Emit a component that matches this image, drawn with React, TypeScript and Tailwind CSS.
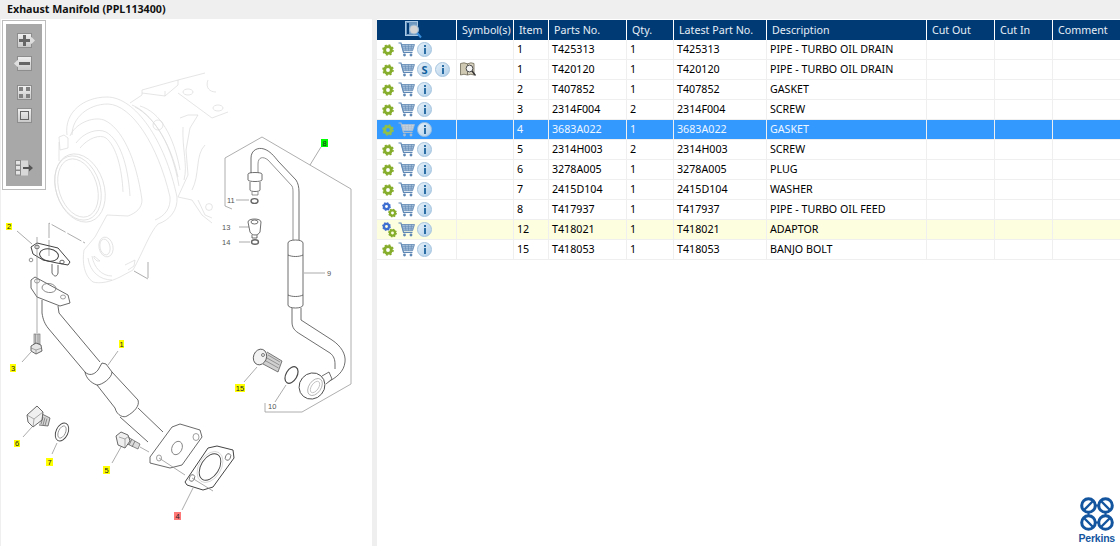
import type { ReactNode } from 'react';

const GRID =
  'grid grid-cols-[80px_57px_35px_78px_47px_93px_160px_68px_58px_67px]';

interface Part {
  item: string;
  no: string;
  qty: string;
  desc: string;
  multi?: boolean;
  service?: boolean;
  selected?: boolean;
  noted?: boolean;
}

const parts: Part[] = [
  { item: '1', no: 'T425313', qty: '1', desc: 'PIPE - TURBO OIL DRAIN' },
  { item: '1', no: 'T420120', qty: '1', desc: 'PIPE - TURBO OIL DRAIN', service: true },
  { item: '2', no: 'T407852', qty: '1', desc: 'GASKET' },
  { item: '3', no: '2314F004', qty: '2', desc: 'SCREW' },
  { item: '4', no: '3683A022', qty: '1', desc: 'GASKET', selected: true },
  { item: '5', no: '2314H003', qty: '2', desc: 'SCREW' },
  { item: '6', no: '3278A005', qty: '1', desc: 'PLUG' },
  { item: '7', no: '2415D104', qty: '1', desc: 'WASHER' },
  { item: '8', no: 'T417937', qty: '1', desc: 'PIPE - TURBO OIL FEED', multi: true },
  { item: '12', no: 'T418021', qty: '1', desc: 'ADAPTOR', multi: true, noted: true },
  { item: '15', no: 'T418053', qty: '1', desc: 'BANJO BOLT' },
];

function GearShape({ cx, cy, r, color }: { cx: number; cy: number; r: number; color: string }) {
  const circ = 2 * Math.PI * (r - 0.8);
  return (
    <g fill="none" stroke={color}>
      <circle cx={cx} cy={cy} r={r * 0.58} strokeWidth={r * 0.5} />
      <circle cx={cx} cy={cy} r={r - 0.8} strokeWidth={1.6} strokeDasharray={`${circ / 16} ${circ / 16}`} />
    </g>
  );
}

function Gear({ faded }: { faded?: boolean }) {
  return (
    <svg width="12" height="12" viewBox="0 0 12 12" className="shrink-0">
      <GearShape cx={6} cy={6} r={5.8} color={faded ? '#8fc04a' : '#86ad2c'} />
    </svg>
  );
}

function MultiGear() {
  return (
    <svg width="15" height="16" viewBox="0 0 15 16" className="-mr-[3px] shrink-0">
      <GearShape cx={4.5} cy={4.5} r={4.4} color="#3f6fd0" />
      <GearShape cx={10.5} cy={11} r={4.4} color="#86ad2c" />
    </svg>
  );
}

function Cart({ faded }: { faded?: boolean }) {
  const c = faded ? '#a9bccf' : '#5f88b4';
  return (
    <svg width="17" height="15" viewBox="0 0 17 15" fill="none" className="shrink-0">
      <path d="M0.5 1 L3 1 L5.5 10.5 L14.5 10.5" stroke={c} strokeWidth="1.2" />
      <path d="M3.6 2.5 L16.5 2.5 L14.5 8.8 L5.2 8.8 Z" fill={faded ? '#c4d2e0' : '#a5bfd9'} stroke={c} strokeWidth="0.8" />
      <path d="M7 2.5 L8 8.8 M10.3 2.5 L10.6 8.8 M13.5 2.5 L13 8.8 M4.2 4.7 L15.8 4.7 M4.8 6.8 L15.1 6.8" stroke={c} strokeWidth="0.6" />
      <circle cx="6.5" cy="13" r="1.4" fill={c} />
      <circle cx="13" cy="13" r="1.4" fill={c} />
    </svg>
  );
}

function Bubble({ children }: { children: ReactNode }) {
  return (
    <span className="flex h-[15px] w-[15px] shrink-0 items-center justify-center rounded-full border border-[#a3c3de] bg-gradient-to-br from-[#e6f0f9] to-[#b0cfe8]">
      {children}
    </span>
  );
}

function Info() {
  return (
    <Bubble>
      <span className="flex flex-col items-center gap-[1px]">
        <span className="h-[2px] w-[2px] bg-[#2a6ea5]" />
        <span className="h-[6px] w-[2px] bg-[#2a6ea5]" />
      </span>
    </Bubble>
  );
}

function Service() {
  return (
    <Bubble>
      <span className="text-[11px] leading-none font-bold text-[#0f5f9c]">S</span>
    </Bubble>
  );
}

function BookSearch() {
  return (
    <svg width="17" height="15" viewBox="0 0 17 15" fill="none" className="ml-[3px] shrink-0">
      <path d="M0.5 1.5 Q4 0 7.5 1.8 L7.5 13 Q4 11.5 0.5 13 Z" fill="#cfc9b4" stroke="#6f6a58" strokeWidth="0.8" />
      <path d="M7.5 1.8 Q11 0 14 1.5 L14 13 Q11 11.5 7.5 13 Z" fill="#d9d4c2" stroke="#6f6a58" strokeWidth="0.8" />
      <circle cx="9.5" cy="6.5" r="3.4" fill="#f4f4f4" stroke="#4c4c4c" strokeWidth="1" />
      <path d="M12 9 L15.5 13.5" stroke="#333" strokeWidth="1.4" />
    </svg>
  );
}

function HeaderSearch() {
  return (
    <svg width="17" height="18" viewBox="0 0 17 18" fill="none">
      <rect x="0.5" y="0.5" width="12" height="14" fill="#6f98c0" stroke="#a9c8e4" />
      <rect x="2" y="2" width="2" height="11" fill="#003a75" />
      <circle cx="9" cy="8.5" r="4.5" fill="#d4d4d4" stroke="#8fb3d3" strokeWidth="1.2" />
      <path d="M12.200 12 L16 16.500" stroke="#3a8fdc" strokeWidth="2" />
    </svg>
  );
}

function Row({ part }: { part: Part }) {
  const bg = part.selected ? 'bg-[#3399ff] text-[#eef6ff]' : part.noted ? 'bg-[#fdfde0] text-black' : 'bg-white text-black';
  const cell = 'border-r border-r-[#efefef] pl-[3px] whitespace-nowrap';
  return (
    <div className={`${GRID} h-[20px] border-b border-b-[#efefef] text-[10.7px] leading-[18px] ${bg}`}>
      <div className="flex items-center border-r border-r-[#efefef] pl-[5px]">
        {part.multi ? <MultiGear /> : <Gear faded={part.selected} />}
        <span className="mr-[2px] ml-[4px]">
          <Cart faded={part.selected} />
        </span>
        {part.service && (
          <span className="mr-[3px]">
            <Service />
          </span>
        )}
        <Info />
      </div>
      <div className="flex items-center border-r border-r-[#efefef]">{part.service && <BookSearch />}</div>
      <div className={cell}>{part.item}</div>
      <div className={cell}>{part.no}</div>
      <div className={cell}>{part.qty}</div>
      <div className={cell}>{part.no}</div>
      <div className={cell}>{part.desc}</div>
      <div className={cell} />
      <div className={cell} />
      <div />
    </div>
  );
}

function ToolButton({ children, className }: { children: ReactNode; className?: string }) {
  return (
    <div className={`relative flex h-[15px] w-[15px] items-center justify-center border border-[#8d8d8d] bg-gradient-to-b from-[#f0f0f0] to-[#c9c9c9] ${className ?? ''}`}>
      {children}
    </div>
  );
}

function Toolbar() {
  return (
    <div className="absolute top-[1px] left-[1px] h-[170px] w-[44px] border border-[#bcbcbc] bg-white p-[3px]">
      <div className="flex h-full w-full flex-col items-center bg-[#a8a8a8] pt-[9px]">
        <ToolButton>
          <span className="absolute top-[4px] -right-[3px] h-[5px] w-[5px] rotate-45 bg-[#dedede]" />
          <svg width="11" height="11" viewBox="0 0 11 11" className="relative">
            <path d="M0 4h4V0h3v4h4v3H7v4H4V7H0z" fill="#666" />
          </svg>
        </ToolButton>
        <ToolButton className="mt-[8px]">
          <span className="absolute top-[4px] -left-[3px] h-[5px] w-[5px] rotate-45 bg-[#dedede]" />
          <svg width="11" height="3" viewBox="0 0 11 3" className="relative">
            <rect width="11" height="3" fill="#666" />
          </svg>
        </ToolButton>
        <ToolButton className="mt-[14px]">
          <svg width="13" height="13" viewBox="0 0 13 13" fill="#808080">
            <rect x="1" y="1" width="4" height="4" />
            <rect x="8" y="1" width="4" height="4" />
            <rect x="1" y="8" width="4" height="4" />
            <rect x="8" y="8" width="4" height="4" />
          </svg>
        </ToolButton>
        <ToolButton className="mt-[8px]">
          <svg width="9" height="9" viewBox="0 0 9 9" fill="none">
            <rect x="0.5" y="0.5" width="8" height="8" stroke="#666" />
          </svg>
        </ToolButton>
        <svg width="18" height="16" viewBox="0 0 18 16" className="mt-[37px]">
          <rect x="0.5" y="0.5" width="5" height="4.5" fill="#e4e4e4" stroke="#8a8a8a" />
          <rect x="0.5" y="5.5" width="5" height="4.5" fill="#e4e4e4" stroke="#8a8a8a" />
          <rect x="0.5" y="10.5" width="5" height="4.5" fill="#e4e4e4" stroke="#8a8a8a" />
          <rect x="6" y="0.5" width="7" height="15" fill="#d8d8d8" />
          <path d="M8 7h6V4.5L18 8l-4 3.5V9H8z" fill="#555" />
        </svg>
      </div>
    </div>
  );
}

function Callout({ x, y, w, h, label, fill }: { x: number; y: number; w: number; h: number; label: string; fill: string }) {
  return (
    <g>
      <rect x={x} y={y} width={w} height={h} fill={fill} />
      <text x={x + w / 2} y={y + h - 1.5} textAnchor="middle" fontSize="7.5" fontFamily="Liberation Sans, sans-serif" fill="#222">
        {label}
      </text>
    </g>
  );
}

function PlainLabel({ x, y, label }: { x: number; y: number; label: string }) {
  return (
    <text x={x} y={y} fontSize="7.5" fontFamily="Liberation Sans, sans-serif" fill="#555">
      {label}
    </text>
  );
}

function Diagram() {
  return (
    <svg width="371" height="527" viewBox="1 19 371 527" fill="none" className="block">
      {/* turbo, ghosted */}
      <g stroke="#dadada" strokeWidth="0.7">
        <path d="M67 135 C64 112 84 97 107 97 C135 97 165 140 177 197 C178 210 170 220 158 224 C150 232 143 252 133 270 L120 277 C110 282 100 284 93 282 C84 276 82 262 84 250 L95 237 L107 215" />
        <path d="M72 135 C72 118 88 104 108 104 C132 105 158 145 170 197 C171 208 165 216 155 220" />
        <path d="M70 136 C75 124 92 116 104 120 C122 128 136 158 142 200 C142 208 136 213 128 216 L107 215" />
        <path d="M76 143 C84 132 98 128 106 132 C120 140 128 165 130 196" />
        <path d="M80 148 C88 138 100 134 106 138 C116 146 122 168 123 192" />
        <ellipse cx="78" cy="188" rx="22" ry="33" transform="rotate(-18 78 188)" />
        <ellipse cx="78" cy="188" rx="19" ry="30" transform="rotate(-18 78 188)" />
        <ellipse cx="80" cy="188" rx="24" ry="35" transform="rotate(-18 80 188)" />
        <path d="M59 137 L60 150 L68 148 L68 138 L64 135 Z M59 142 L59 161" />
        <path d="M130 103 L142 95 L142 90 L178 80 L205 73 M142 93 L165 96 L178 85 L178 80 M165 96 L165 91 M178 93 L212 118 L228 112" />
        <ellipse cx="188" cy="92" rx="5" ry="3" />
        <ellipse cx="218" cy="108" rx="5" ry="3" />
        <path d="M208 80 C205 88 210 92 216 92" />
        <path d="M132 105 C150 112 170 140 178 177 M135 107 C156 118 172 146 179 186 M140 106 C160 112 174 136 180 170 M180 118 L188 115 L198 115 L190 128 L186 150 L188 175 L178 197 L192 200 L202 215 L212 223" />
        <path d="M205 145 C195 155 200 175 192 190 M183 127 C182 150 188 165 184 180" />
        <circle cx="158" cy="125" r="5" />
        <circle cx="209" cy="207" r="3.4" />
        <path d="M198 200 L205 215 L212 218" />
        <ellipse cx="106" cy="247" rx="7" ry="10" transform="rotate(-12 106 247)" />
        <ellipse cx="105" cy="247" rx="5" ry="8" transform="rotate(-12 105 247)" />
        <path d="M94 256 L100 261 L97 261 L94 258 Z M125 265 L135 260 L134 266 L128 270" />
        <path d="M88 258 C90 272 100 280 112 280 M92 256 C94 268 102 276 112 276" />
      </g>
      <path d="M49 256 L49 223 L85 243 M134 271 L148 279 M148 262 L148 280" stroke="#8a8a8a" strokeWidth="0.7" strokeDasharray="16 2" />

      {/* pipe 8 frame */}
      <path d="M232 209 L225 206 L225 158 L262 137 L351 189 L351 384 L302 412 L265 412 L265 403" stroke="#9a9a9a" strokeWidth="0.8" />
      <path d="M321 147 L310 165 M236 200 L249 200 M239 227 L249 227 M239 242 L250 242 M304 273 L325 273 M286 385 L275 402 M257 367 L244 382" stroke="#888" strokeWidth="0.7" />

      {/* feed pipe */}
      <g stroke="#4a4a4a" strokeWidth="0.8">
        <path d="M251 173 L251 158 C251 150 258 147 264 149 C270 151 274 156 278 161 L296 180 C298 183 299 187 299 192 L299 240" />
        <path d="M258 173 L258 164 C258 157 263 156 268 160 L292 186 C293 188 293 190 293 193 L293 240" stroke="#777" />
        <path d="M248 174 C248 172 262 172 262 174 L262 180 C262 182 248 182 248 180 Z" />
        <path d="M250 182 L250 190 C250 192 260 192 260 190 L260 182" />
        <path d="M252 192 L252 195 L258 195 L258 192" strokeWidth="0.6" />
        <ellipse cx="254.500" cy="201" rx="3.500" ry="2.400" strokeWidth="1.400" stroke="#666" />
        <path d="M248 222 C248 218 261 218 261 222 L260 232 C258 236 252 236 250 232 Z" />
        <ellipse cx="254.500" cy="222" rx="3.500" ry="2" />
        <path d="M252 235 L252 238 L257 238 L257 235" />
        <ellipse cx="255" cy="242" rx="3.500" ry="2.200" strokeWidth="1.400" stroke="#666" />
        <path d="M288 243 C288 239 303 239 303 243 L303 305 C303 309 288 309 288 305 Z" strokeWidth="0.8" />
        <path d="M288 255 C292 257 299 257 303 255 M288 295 C292 297 299 297 303 295" strokeWidth="0.8" />
        <path d="M292 308 L292 322 C292 328 295 331 300 334 L330 353 C334 356 335 360 335 364 L335 369" />
        <path d="M301 308 L301 320 L332 340 C341 346 346 354 345 362 C344 372 336 378 326 383" />
        <path d="M322 376 L329 372 L332 379 L326 384" fill="#fff" />
        <ellipse cx="312" cy="386" rx="12.500" ry="13.500" transform="rotate(40 312 386)" fill="#fff" strokeWidth="0.9" />
        <ellipse cx="315" cy="387" rx="6" ry="9.500" transform="rotate(35 315 387)" stroke="#aaa" />
        <ellipse cx="315" cy="387" rx="3.500" ry="6.500" transform="rotate(35 315 387)" stroke="#bbb" />
        <ellipse cx="291.500" cy="375" rx="5.500" ry="9" transform="rotate(30 291.500 375)" strokeWidth="1.200" />
        <path d="M267 352 L282 361 L278 372 L263 364" fill="#d0d0d0" strokeWidth="0.7" />
        <path d="M268 355 L280 362 M267 358 L279.500 365 M266 361 L278.500 368" stroke="#777" strokeWidth="0.7" />
        <ellipse cx="260" cy="357" rx="6.500" ry="8" transform="rotate(20 260 357)" fill="#f2f2f2" strokeWidth="0.8" />
        <circle cx="263" cy="355" r="1.500" strokeWidth="0.7" />
      </g>

      {/* drain pipe and joints */}
      <g stroke="#444" strokeWidth="0.8">
        <path d="M31 247 L37 243 L58 248 L70 262 L68 265 L57 263 L43 260 L33 254 Z" strokeWidth="1" />
        <ellipse cx="49" cy="255" rx="9.500" ry="6" transform="rotate(10 49 255)" strokeWidth="1" />
        <ellipse cx="37" cy="247" rx="2.200" ry="1.800" />
        <ellipse cx="62" cy="262" rx="2.200" ry="1.800" />
        <circle cx="31" cy="260" r="1.800" stroke="#777" />
        <path d="M52 264 L52 273 C54 277 57 277 58 273 L58 265" />
        <path d="M31 280 L35 277 L68 295 L70 303 L60 306 L37 297 L31 288 Z" />
        <ellipse cx="49" cy="288" rx="7" ry="4.500" transform="rotate(8 49 288)" stroke="#777" />
        <ellipse cx="37" cy="281" rx="2.500" ry="2" stroke="#888" />
        <ellipse cx="63" cy="297" rx="2.500" ry="2" stroke="#888" />
        <path d="M42 300 L42 313 C43 320 45 324 48 328 L85 372" />
        <path d="M58 306 L59 313 L100 362" />
        <path d="M85 372 C89 376 94 375 98 370 L102 363 L106 364 L112 372 C112 378 102 385 97 385 C91 383 86 378 85 372 Z" />
        <path d="M97 385 L115 408 M112 372 L138 400 M115 408 C117 416 124 418 127 416 C134 412 140 406 138 400" />
        <path d="M120 417 L148 442 M138 408 L163 432" />
        <path d="M150 457 L172 427 L180 424 L200 430 L202 437 L182 465 L170 468 L150 463 Z" fill="#fff" />
        <ellipse cx="177" cy="448" rx="5" ry="7" transform="rotate(25 177 448)" stroke="#777" />
        <ellipse cx="196" cy="437" rx="3" ry="3.500" stroke="#888" />
        <ellipse cx="159" cy="458" rx="2.500" ry="3" stroke="#888" />
        <path d="M185 482 L208 448 L217 446 L233 450 L234 458 L213 487 L203 490 L187 485 Z" strokeWidth="1" fill="#fff" />
        <ellipse cx="210" cy="467" rx="9" ry="14.500" transform="rotate(32 210 467)" strokeWidth="0.9" />
        <ellipse cx="210" cy="467" rx="11" ry="17" transform="rotate(32 210 467)" stroke="#bbb" strokeWidth="0.5" />
        <ellipse cx="228" cy="457" rx="2.500" ry="3.500" transform="rotate(25 228 457)" stroke="#666" />
        <ellipse cx="192" cy="478" rx="2.500" ry="3.500" transform="rotate(25 192 478)" stroke="#666" />

        {/* bolt 5 */}
        <path d="M126 436 L140 444 L138 449 L123 442 Z" fill="#dcdcdc" strokeWidth="0.6" />
        <path d="M129 437 L126 443 M132 439 L129 445 M135 441 L132 447" stroke="#666" strokeWidth="0.8" />
        <path d="M116 436 L121 432 L128 435 L130 441 L125 448 L118 445 Z" fill="#efefef" />
        <path d="M119 437 L125 439 L125 447 M125 439 L129 436" stroke="#777" strokeWidth="0.6" />
        <path d="M140 447 L149 452" stroke="#777" strokeWidth="0.6" />

        {/* plug 6 */}
        <path d="M42 414 L50 418 L48 426 L39 425" fill="#d8d8d8" strokeWidth="0.7" />
        <path d="M43 417 L41 424 M45 417.500 L43 425 M47 418.500 L45 425.500" stroke="#666" strokeWidth="0.7" />
        <path d="M27 415 L37 406 L43 412 L42 420 L33 427 L28 422 Z" fill="#f0f0f0" />
        <path d="M27 415 L34 419 L33 427 M34 419 L43 412" stroke="#777" strokeWidth="0.6" />

        {/* washer 7 */}
        <ellipse cx="62" cy="432" rx="6" ry="9.500" transform="rotate(25 62 432)" strokeWidth="0.9" />
        <ellipse cx="62" cy="432" rx="3.500" ry="6.500" transform="rotate(25 62 432)" stroke="#888" />

        {/* bolt 3 */}
        <rect x="34" y="334" width="6" height="10" fill="#d0d0d0" stroke="#666" strokeWidth="0.6" />
        <path d="M35.500 334 L35.500 344 M38 334 L38 344" stroke="#888" strokeWidth="0.7" />
        <path d="M31 346 L36 343 L41 345 L42 351 L36 354 L31 351 Z" fill="#e6e6e6" />
        <path d="M31 348 L36 350 L42 348 M36 350 L36 354" stroke="#777" strokeWidth="0.6" />
      </g>
      <path d="M37 237 L37 333 M17 231 L32 244 M31 352 L22 362 M118 351 L108 365 M121 447 L112 463 M32 427 L23 437 M57 443 L52 454 M193 488 L182 510 M159 458 L185 475 M192 478 L213 491" stroke="#888" strokeWidth="0.7" />

      <Callout x={321} y={139} w={7} h={8} label="8" fill="#00ff00" />
      <Callout x={6} y={223} w={6} h={7} label="2" fill="#ffff00" />
      <Callout x={119} y={340} w={5} h={8} label="1" fill="#ffff00" />
      <Callout x={10} y={364} w={6} h={8} label="3" fill="#ffff00" />
      <Callout x={14} y={440} w={6} h={7} label="6" fill="#ffff00" />
      <Callout x={46} y={458} w={7} h={8} label="7" fill="#ffff00" />
      <Callout x={103} y={466} w={7} h={8} label="5" fill="#ffff00" />
      <Callout x={174} y={512} w={7} h={8} label="4" fill="#ff7878" />
      <Callout x={235} y={384} w={10} h={8} label="15" fill="#ffff00" />
      <PlainLabel x={227} y={203} label="11" />
      <PlainLabel x={222} y={230} label="13" />
      <PlainLabel x={222} y={245} label="14" />
      <PlainLabel x={327} y={276} label="9" />
      <PlainLabel x={268} y={409} label="10" />
    </svg>
  );
}

function PerkinsLogo() {
  const ring = (cx: number, cy: number, d: string, key: string) => (
    <g key={key}>
      <circle cx={cx} cy={cy} r="6.800" stroke="#14559f" strokeWidth="3" />
      <path d={d} stroke="#14559f" strokeWidth="2.400" />
    </g>
  );
  return (
    <div className="flex flex-col items-center">
      <svg width="36" height="36" viewBox="0 0 36 36" fill="none">
        {ring(9.5, 9.5, 'M5 14 L14 5', 'tl')}
        {ring(26.5, 9.5, 'M22 5 L31 14', 'tr')}
        {ring(9.5, 26.5, 'M5 22 L14 31', 'bl')}
        {ring(26.5, 26.5, 'M22 31 L31 22', 'br')}
        <path d="M16 9.500 L20 9.500 M16 26.500 L20 26.500 M9.500 16 L9.500 20 M26.500 16 L26.500 20" stroke="#14559f" strokeWidth="2" />
      </svg>
      <span className="font-['Liberation_Sans',sans-serif] text-[10.5px] leading-[12px] font-bold tracking-[-0.2px] text-[#14559f]">Perkins</span>
    </div>
  );
}

export default function App() {
  const th = 'border-r border-r-white pl-[5px] whitespace-nowrap';
  return (
    <div className="flex h-[546px] w-[1120px] flex-col overflow-hidden bg-[#efefef] font-['Noto_Sans',sans-serif]">
      <div className="h-[19px] pl-[7px] text-[10.7px] leading-[18px] font-bold text-[#111]">Exhaust Manifold (PPL113400)</div>
      <div className="flex min-h-0 flex-1">
        <div className="relative ml-[1px] w-[371px] bg-white">
          <Diagram />
          <Toolbar />
        </div>
        <div className="ml-[5px] flex min-w-0 flex-1 flex-col bg-white">
          <div className={`${GRID} mt-[1px] h-[20px] bg-[#003a75] text-[10.7px] leading-[20px] text-[#e6eef6]`}>
            <div className="flex items-center justify-center border-r border-r-white pr-[7px]">
              <HeaderSearch />
            </div>
            <div className={th}>Symbol(s)</div>
            <div className={th}>Item</div>
            <div className={th}>Parts No.</div>
            <div className={th}>Qty.</div>
            <div className={th}>Latest Part No.</div>
            <div className={th}>Description</div>
            <div className={th}>Cut Out</div>
            <div className={th}>Cut In</div>
            <div className="pl-[5px] whitespace-nowrap">Comment</div>
          </div>
          {parts.map((part) => (
            <Row key={part.no} part={part} />
          ))}
          <div className="mt-auto self-end pr-[5px] pb-[2px]">
            <PerkinsLogo />
          </div>
        </div>
      </div>
    </div>
  );
}
